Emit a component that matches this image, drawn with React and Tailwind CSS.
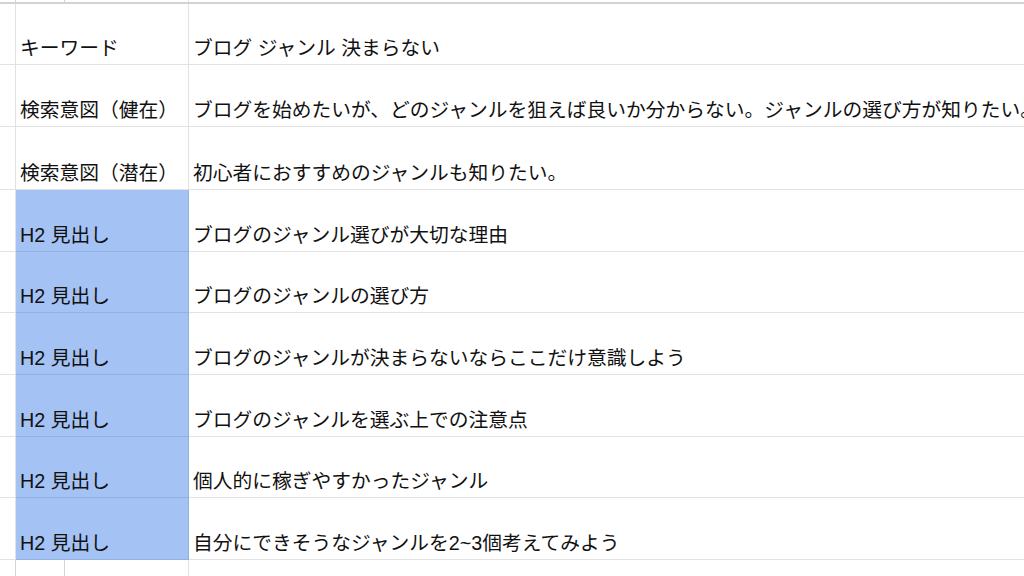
const ROWS = [
  { label: 'キーワード', value: 'ブログ ジャンル 決まらない', h: 'h-[61px]' },
  { label: '検索意図（健在）', value: 'ブログを始めたいが、どのジャンルを狙えば良いか分からない。ジャンルの選び方が知りたい。', h: 'h-[62px]' },
  { label: '検索意図（潜在）', value: '初心者におすすめのジャンルも知りたい。', h: 'h-[63px]' },
  { label: 'H2 見出し', value: 'ブログのジャンル選びが大切な理由', h: 'h-[62px]', hl: true },
  { label: 'H2 見出し', value: 'ブログのジャンルの選び方', h: 'h-[61px]', hl: true },
  { label: 'H2 見出し', value: 'ブログのジャンルが決まらないならここだけ意識しよう', h: 'h-[62px]', hl: true },
  { label: 'H2 見出し', value: 'ブログのジャンルを選ぶ上での注意点', h: 'h-[62px]', hl: true },
  { label: 'H2 見出し', value: '個人的に稼ぎやすかったジャンル', h: 'h-[61px]', hl: true },
  { label: 'H2 見出し', value: '自分にできそうなジャンルを2~3個考えてみよう', h: 'h-[62px]', hl: true },
];

function Strip({ h }) {
  return (
    <div className={`flex ${h}`}>
      <div className="w-[16px] shrink-0 border-r border-[#d4d4d4]" />
      <div className="w-[49px] shrink-0 border-r border-[#d4d4d4]" />
      <div className="w-[124px] shrink-0 border-r border-[#e2e2e2]" />
      <div className="flex-1" />
    </div>
  );
}

export default function App() {
  return (
    <div className="w-[1024px] h-[576px] overflow-hidden bg-white text-[#111] text-[19.75px] leading-[22px] whitespace-nowrap"
      style={{ fontFamily: '"Liberation Sans", "Noto Sans CJK JP", sans-serif' }}>
      <Strip h="h-[2px]" />
      <div className="h-[2px] bg-[#d2d2d2]" />
      {ROWS.map((r, i) => (
        <div key={i} className={`flex ${r.h}`}>
          <div className="w-[16px] shrink-0 border-r border-b border-[#e2e2e2]" />
          <div className={`w-[173px] shrink-0 border-r border-b flex items-end pl-[4px] pb-[5px] ${r.hl ? 'bg-[#a4c2f4] border-[#92b1e3]' : 'border-[#e2e2e2]'}`}>
            {r.label}
          </div>
          <div className="flex-1 flex items-end pl-[4px] pb-[5px] border-b border-[#e2e2e2] overflow-hidden">
            {r.value}
          </div>
        </div>
      ))}
      <Strip h="h-[20px]" />
    </div>
  );
}
